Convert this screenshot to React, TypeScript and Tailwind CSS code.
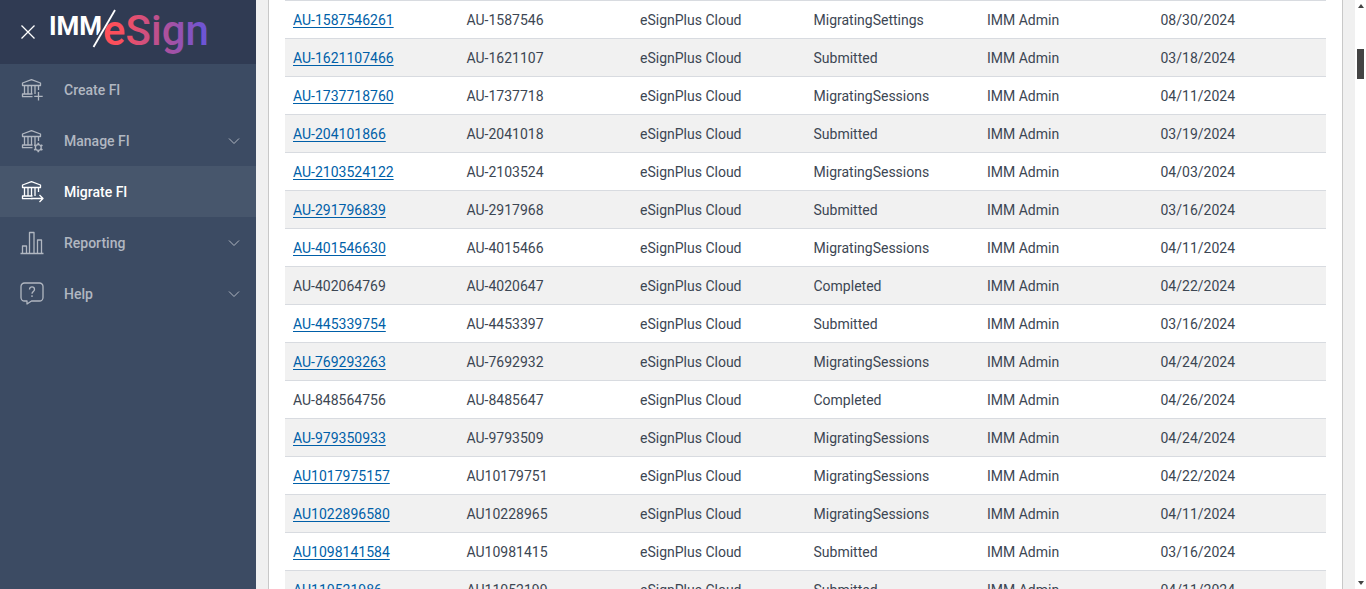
import { useState, type ReactNode } from 'react'
import clsx from 'clsx'

type Migration = {
  id: string
  code: string
  status: string
  date: string
}

const migrations: Migration[] = [
  { id: 'AU-1587546261', code: 'AU-1587546', status: 'MigratingSettings', date: '08/30/2024' },
  { id: 'AU-1621107466', code: 'AU-1621107', status: 'Submitted', date: '03/18/2024' },
  { id: 'AU-1737718760', code: 'AU-1737718', status: 'MigratingSessions', date: '04/11/2024' },
  { id: 'AU-204101866', code: 'AU-2041018', status: 'Submitted', date: '03/19/2024' },
  { id: 'AU-2103524122', code: 'AU-2103524', status: 'MigratingSessions', date: '04/03/2024' },
  { id: 'AU-291796839', code: 'AU-2917968', status: 'Submitted', date: '03/16/2024' },
  { id: 'AU-401546630', code: 'AU-4015466', status: 'MigratingSessions', date: '04/11/2024' },
  { id: 'AU-402064769', code: 'AU-4020647', status: 'Completed', date: '04/22/2024' },
  { id: 'AU-445339754', code: 'AU-4453397', status: 'Submitted', date: '03/16/2024' },
  { id: 'AU-769293263', code: 'AU-7692932', status: 'MigratingSessions', date: '04/24/2024' },
  { id: 'AU-848564756', code: 'AU-8485647', status: 'Completed', date: '04/26/2024' },
  { id: 'AU-979350933', code: 'AU-9793509', status: 'MigratingSessions', date: '04/24/2024' },
  { id: 'AU1017975157', code: 'AU10179751', status: 'MigratingSessions', date: '04/22/2024' },
  { id: 'AU1022896580', code: 'AU10228965', status: 'MigratingSessions', date: '04/11/2024' },
  { id: 'AU1098141584', code: 'AU10981415', status: 'Submitted', date: '03/16/2024' },
  { id: 'AU110521986', code: 'AU11052199', status: 'Submitted', date: '04/11/2024' },
]

function Icon({ children }: { children: ReactNode }) {
  return (
    <svg
      viewBox="0 0 24 24"
      className="size-6 shrink-0"
      fill="none"
      stroke="currentColor"
      strokeWidth="1.3"
      strokeLinejoin="round"
      aria-hidden="true"
    >
      {children}
    </svg>
  )
}

// Bank building shared by the three FI entries; the badge goes in the corner
function BankIcon({ children }: { children: ReactNode }) {
  return (
    <Icon>
      <path d="M2.5 7.5V5L11.500 1.700 20.500 5v2.500z" />
      <path d="M4.500 7.500v8.500M8 7.500v8.500M11.500 7.500v8.500M15 7.500v8.500M18.500 7.500v4.500" />
      <path d="M12.500 16h-10v2.700h10" />
      {children}
    </Icon>
  )
}

const menu = [
  {
    label: 'Create FI',
    icon: (
      <BankIcon>
        <path d="M18.5 14v8.5M14.2 18.3h8.5" />
      </BankIcon>
    ),
  },
  {
    label: 'Manage FI',
    expandable: true,
    icon: (
      <BankIcon>
        <circle cx="18.3" cy="18.5" r="2.9" />
        <path
          d="M18.3 13.8v1.8M18.3 21.4v1.8M14.2 16.1l1.6 1M20.8 19.9l1.6 1M22.4 16.1l-1.6 1M15.8 19.9l-1.6 1"
          strokeWidth="1.8"
        />
      </BankIcon>
    ),
  },
  {
    label: 'Migrate FI',
    icon: (
      <BankIcon>
        <path d="M11 18.500h12M19.500 15l3.500 3.500-3.500 3.500" />
      </BankIcon>
    ),
  },
  {
    label: 'Reporting',
    expandable: true,
    icon: (
      <Icon>
        <path d="M0.500 22.500h23M2.500 22.500v-7.500h4v7.500M9.500 22.500v-21h4.500v21M17.500 22.500v-13.500h4v13.500" />
      </Icon>
    ),
  },
  {
    label: 'Help',
    expandable: true,
    icon: (
      <Icon>
        <path d="M4.500 1h15A3.500 3.500 0 0 1 23 4.500v11a3.500 3.500 0 0 1-3.500 3.500h-8L7 22v-3H4.500A3.500 3.500 0 0 1 1 15.500v-11A3.500 3.500 0 0 1 4.500 1z" />
        <path d="M9.500 7.500c0-3.500 5-3.500 5 0 0 2-2.500 2-2.500 4.300M12 13.300v1.700" />
      </Icon>
    ),
  },
]

function Logo() {
  return (
    <svg viewBox="0 0 160 56" className="h-14 w-40" role="img" aria-label="IMM eSign">
      <defs>
        <linearGradient id="esign" gradientUnits="userSpaceOnUse" x1="54" y1="0" x2="156" y2="0">
          <stop offset="0" stopColor="#ff4f58" />
          <stop offset="0.18" stopColor="#f84f5e" />
          <stop offset="0.5" stopColor="#c0508c" />
          <stop offset="1" stopColor="#6a55d8" />
        </linearGradient>
      </defs>
      <text x="-1" y="31" fontFamily="Roboto, sans-serif" fontWeight="700" fontSize="26" fill="#fff">
        IMM
      </text>
      {/* dark halo keeps the slash clear of the letters on both sides */}
      <path d="M65 6L43.500 43" stroke="#303b53" strokeWidth="5" />
      <text x="53" y="41" fontFamily="Roboto, sans-serif" fontWeight="500" fontSize="42" fill="url(#esign)">
        eSign
      </text>
      <path d="M65 6L43.500 43" stroke="#fff" strokeWidth="1.800" />
    </svg>
  )
}

function Sidebar() {
  const [active, setActive] = useState('Migrate FI')

  return (
    <aside className="w-64 shrink-0 bg-[#3c4b63]">
      <header className="flex h-16 items-center bg-[#303b53] pl-5">
        <button type="button" aria-label="Close menu" className="flex size-4 items-center justify-center text-white">
          <svg viewBox="0 0 16 16" className="size-4" fill="none" stroke="currentColor" strokeWidth="1.3">
            <path d="M1.5 1.5l13 13M14.5 1.5l-13 13" />
          </svg>
        </button>
        <div className="ml-3.5">
          <Logo />
        </div>
      </header>
      <nav>
        {menu.map((item) => (
          <button
            key={item.label}
            type="button"
            onClick={() => setActive(item.label)}
            className={clsx(
              'flex h-[51px] w-full items-center gap-5 pr-4 pl-5 text-left text-sm font-medium',
              item.label === active ? 'bg-[#47566c] text-white' : 'text-[#b1b7c1]',
            )}
          >
            {item.icon}
            <span className="flex-1">{item.label}</span>
            {item.expandable && (
              <svg viewBox="0 0 12 12" className="size-3" fill="none" stroke="currentColor" aria-hidden="true">
                <path d="M1 3.5l5 5 5-5" />
              </svg>
            )}
          </button>
        ))}
      </nav>
    </aside>
  )
}

function MigrationTable() {
  return (
    <table className="w-full table-fixed text-left text-sm text-[#3c4653]">
      <tbody>
        {migrations.map((m) => (
          <tr key={m.id} className="h-[38px] border-t border-[#d8dbe0] even:bg-[#f1f1f1]">
            <td className="px-2">
              {m.status === 'Completed' ? (
                m.id
              ) : (
                <a href="#" className="text-[#005fa8] underline underline-offset-2">
                  {m.id}
                </a>
              )}
            </td>
            <td className="px-2">{m.code}</td>
            <td className="px-2">eSignPlus Cloud</td>
            <td className="px-2">{m.status}</td>
            <td className="px-2">IMM Admin</td>
            <td className="px-2">{m.date}</td>
          </tr>
        ))}
      </tbody>
    </table>
  )
}

function Scrollbar() {
  return (
    <div className="flex w-[11px] shrink-0 flex-col items-center bg-white py-1" aria-hidden="true">
      <svg viewBox="0 0 6 4" className="h-1 w-1.5" fill="#444">
        <path d="M3 0l3 4H0z" />
      </svg>
      <div className="mt-[41px] h-[30px] w-[7px] bg-[#444]" />
      <svg viewBox="0 0 6 4" className="mt-auto h-1 w-1.5" fill="#444">
        <path d="M0 0h6L3 4z" />
      </svg>
    </div>
  )
}

export default function App() {
  return (
    <div className="flex h-screen overflow-hidden bg-[#f0f0f0] font-['Roboto',sans-serif]">
      <Sidebar />
      <main className="min-w-0 flex-1 overflow-hidden px-3">
        <section className="min-h-full border-x border-[#c8c8c8] bg-white px-4">
          <MigrationTable />
        </section>
      </main>
      <Scrollbar />
    </div>
  )
}
